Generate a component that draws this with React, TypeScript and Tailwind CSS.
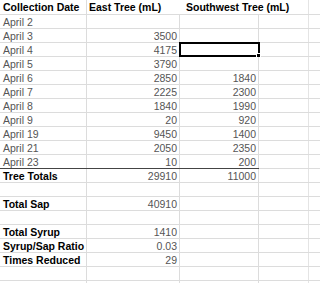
import React from "react";

type Row = {
  label: string;
  east?: string;
  southwest?: string;
  bold?: boolean;
  topRule?: boolean;
  selected?: boolean;
};

const rows: Row[] = [
  { label: "April 2" },
  { label: "April 3", east: "3500" },
  { label: "April 4", east: "4175", selected: true },
  { label: "April 5", east: "3790" },
  { label: "April 6", east: "2850", southwest: "1840" },
  { label: "April 7", east: "2225", southwest: "2300" },
  { label: "April 8", east: "1840", southwest: "1990" },
  { label: "April 9", east: "20", southwest: "920" },
  { label: "April 19", east: "9450", southwest: "1400" },
  { label: "April 21", east: "2050", southwest: "2350" },
  { label: "April 23", east: "10", southwest: "200" },
  { label: "Tree Totals", east: "29910", southwest: "11000", bold: true, topRule: true },
  { label: "" },
  { label: "Total Sap", east: "40910", bold: true },
  { label: "" },
  { label: "Total Syrup", east: "1410", bold: true },
  { label: "Syrup/Sap Ratio", east: "0.03", bold: true },
  { label: "Times Reduced", east: "29", bold: true },
  { label: "" },
  { label: "" },
];

const line = "border-[#dcdcdc]";

function App() {
  return (
    <div
      className="h-[283px] w-[320px] overflow-hidden bg-white text-[10.5px] text-[#555]"
      style={{ fontFamily: '"Liberation Sans", Arial, sans-serif' }}
    >
      <div className={`flex h-[15px] border-b ${line} font-bold text-black`}>
        <div className={`w-[87px] shrink-0 border-r ${line} pl-[3px] pt-[2px] leading-[11px] whitespace-nowrap`}>
          Collection Date
        </div>
        <div className="w-[93px] shrink-0 pl-[2px] pt-[2px] leading-[11px] whitespace-nowrap">East Tree (mL)</div>
        <div className="w-[129px] shrink-0 border-r border-[#e4e4e4] pl-[6px] pt-[2px] leading-[11px] whitespace-nowrap">
          Southwest Tree (mL)
        </div>
        <div className="flex-1" />
      </div>

      {rows.map((row, i) => (
        <div
          key={i}
          className={[
            "flex h-[14px] border-b",
            row.topRule ? "relative" : "",
            line,
          ].join(" ")}
        >
          <div
            className={[
              `w-[87px] shrink-0 overflow-hidden border-r ${line} pl-[3px] pt-[2px] leading-[11px] whitespace-nowrap`,
              row.bold ? "font-bold text-black" : "",
            ].join(" ")}
          >
            {row.label}
          </div>
          <div className={`w-[93px] shrink-0 border-r ${line} pr-[2px] pt-[2px] text-right leading-[11px]`}>
            {row.east}
          </div>
          <div className={`relative w-[79px] shrink-0 border-r ${line} pr-[2px] pt-[2px] text-right leading-[11px]`}>
            {row.southwest}
            {row.selected ? (
              <div className="absolute -top-[1px] -left-[1px] h-[15px] w-[81px] border-2 border-black">
                <div className="absolute -right-[3px] -bottom-[3px] h-[5px] w-[5px] border border-white bg-black" />
              </div>
            ) : null}
          </div>
          <div className="w-[50px] shrink-0 border-r border-[#e4e4e4]" />
          <div className="flex-1" />
          {row.topRule ? <div className="absolute -top-[1px] left-0 h-[1px] w-[259px] bg-[#444]" /> : null}
        </div>
      ))}
    </div>
  );
}

export default App;
